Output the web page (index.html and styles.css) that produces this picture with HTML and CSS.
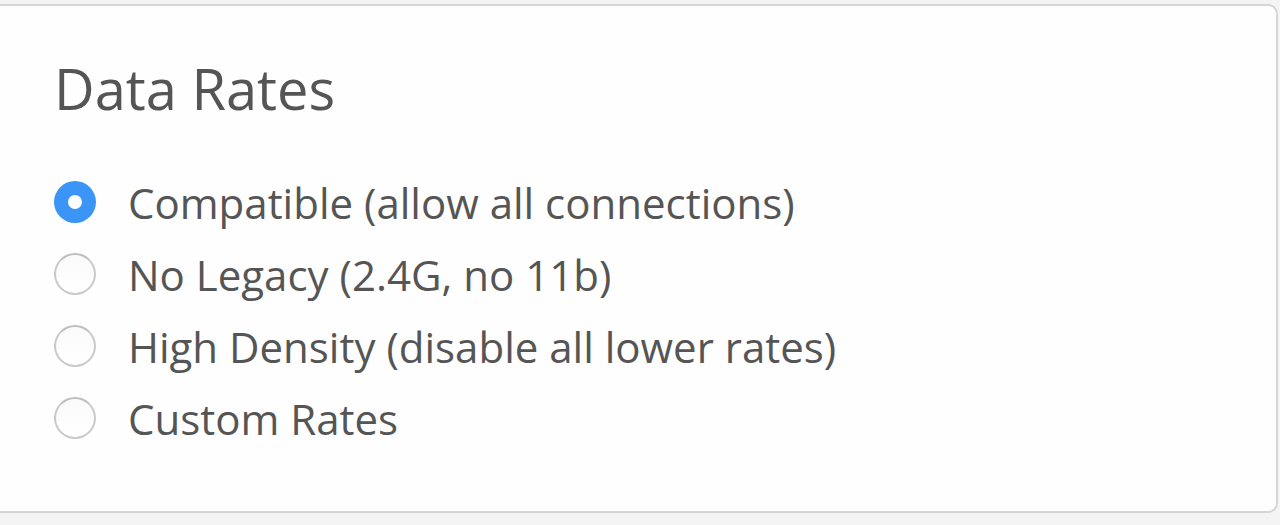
FILE: index.html
```html
<!DOCTYPE html>
<html lang="en">
<head>
    <meta charset="UTF-8">
    <title>Data Rates</title>
    <link rel="stylesheet" href="styles.css">
</head>
<body>
    <div class="card">
        <h2>Data Rates</h2>

        <!-- Rate options -->
        <div class="options">
            <label class="option">
                <input type="radio" name="rates" value="compatible" checked>
                <span class="dot"></span>
                <span>Compatible (allow all connections)</span>
            </label>
            <label class="option">
                <input type="radio" name="rates" value="nolegacy">
                <span class="dot"></span>
                <span>No Legacy (2.4G, no 11b)</span>
            </label>
            <label class="option">
                <input type="radio" name="rates" value="density">
                <span class="dot"></span>
                <span>High Density (disable all lower rates)</span>
            </label>
            <label class="option">
                <input type="radio" name="rates" value="custom">
                <span class="dot"></span>
                <span>Custom Rates</span>
            </label>
        </div>
    </div>
</body>
</html>
```

FILE: styles.css
```css
body {
    margin: 0;
    padding-top: 4px;
    background: #f4f4f4;
    font-family: 'Open Sans', sans-serif;
    color: #555;
}

.card {
    margin-left: -12px;
    width: 1290px;
    height: 509px;
    box-sizing: border-box;
    border: 2px solid #d5d5d5;
    border-radius: 10px;
    background: #fefefe;
    padding: 46px 0 0 64px;
}

h2 {
    margin: 0;
    font-size: 56px;
    font-weight: 400;
    line-height: 72px;
}

.options {
    margin-top: 42px;
    display: flex;
    flex-direction: column;
}

.option {
    display: flex;
    align-items: center;
    gap: 32px;
    height: 72px;
    font-size: 42px;
    cursor: pointer;
}

.option input {
    display: none;
}

.dot {
    width: 42px;
    height: 42px;
    box-sizing: border-box;
    border-radius: 50%;
    border: 2px solid #c9c9c9;
    border-top-color: #bdbdbd;
    background: linear-gradient(#fafafa, #ffffff);
    flex-shrink: 0;
}

.option input:checked + .dot {
    border: none;
    background: #3b95f7;
    position: relative;
}

.option input:checked + .dot::after {
    content: '';
    position: absolute;
    left: 14px;
    top: 14px;
    width: 14px;
    height: 14px;
    border-radius: 50%;
    background: #fff;
}
```
